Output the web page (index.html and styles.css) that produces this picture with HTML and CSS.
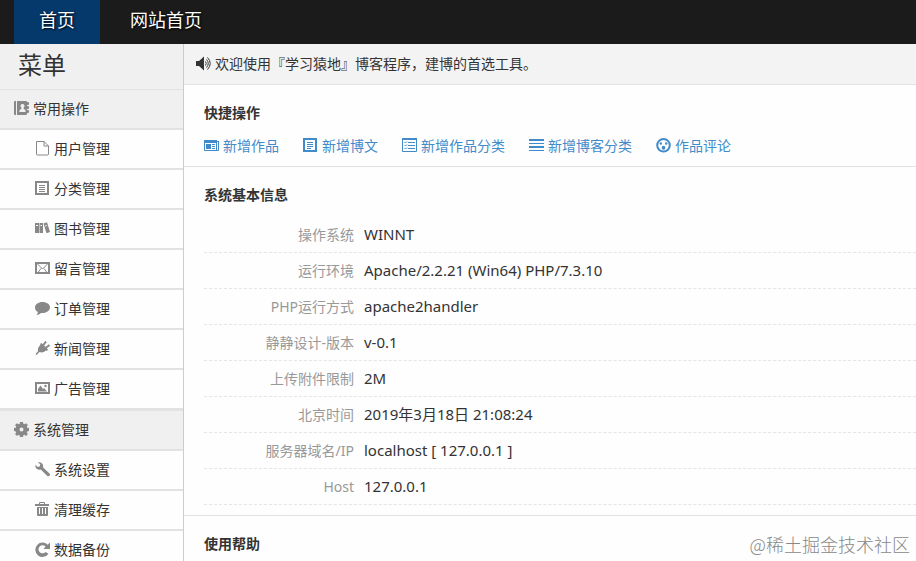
FILE: index.html
```html
<!DOCTYPE html>
<html lang="zh-CN">
<head>
<meta charset="utf-8">
<title>首页</title>
<link rel="stylesheet" href="styles.css">
</head>
<body>
<header class="topbar">
  <nav class="topnav">
    <a class="topnav-link active" href="#">首页</a>
    <a class="topnav-link" href="#">网站首页</a>
  </nav>
</header>
<div class="layout">
  <aside class="sidebar">
    <h1 class="menu-title">菜单</h1>
    <section class="group">
      <h2 class="group-title">
        <svg class="icon" viewBox="0 0 15 15"><path fill-rule="evenodd" d="M1 0h1v14H1q-1 0-1-1V1q0-1 1-1zM3 0h9q1 0 1 1v12q0 1-1 1H3zM8.500 3a2 2 0 0 0-1.200 3.600V8L5.500 9v2h6V9L9.700 8V6.600A2 2 0 0 0 8.500 3z"/><path d="M13 1h1q1 0 1 1v1q0 1-1 1h-1zM13 5h1q1 0 1 1v1q0 1-1 1h-1zM13 9h1q1 0 1 1v1q0 1-1 1h-1z"/></svg>
        常用操作</h2>
      <ul class="items">
        <li><a class="item" href="#"><svg class="icon" viewBox="0 0 15 15"><path class="line" d="M1.500.5h7.500l4.500 4.500v8q0 1-1 1h-10q-1 0-1-1zM9 .5V5h4.500"/></svg>用户管理</a></li>
        <li><a class="item" href="#"><svg class="icon" viewBox="0 0 15 15"><path class="thick" d="M1 1h12v12H1z"/><path d="M4 4h6v1H4zM4 6h6v1H4zM4 8h6v1H4zM4 10h6v1H4z"/></svg>分类管理</a></li>
        <li><a class="item" href="#"><svg class="icon" viewBox="0 0 15 15"><path fill-rule="evenodd" d="M0 2h4v10H0zM1 4v1h2V4zM4.500 2H8v10H4.500zM5.500 4v1H7V4zM8.500 2.500l3.500-1.200L15 11l-3.500 1.200zM10 4.500l.3 1 1.500-.5-.3-1z"/></svg>图书管理</a></li>
        <li><a class="item" href="#"><svg class="icon" viewBox="0 0 15 15"><path class="thick" d="M1 2h13v10H1z"/><path class="line" d="M2.500 3l5 5 5-5M3 11.500l3-4M12 11.500l-3-4"/></svg>留言管理</a></li>
        <li><a class="item" href="#"><svg class="icon" viewBox="0 0 15 15"><path d="M7.500 1C3.400 1 0 3.300 0 6.500c0 2 1.200 3.600 3 4.500-.2 1.200-.8 2-1.700 2.700 2 .1 3.700-.8 4.700-1.800 5 .7 9-2.100 9-5.400C15 3.300 11.600 1 7.500 1z"/></svg>订单管理</a></li>
        <li><a class="item" href="#"><svg class="icon" viewBox="0 0 15 15"><path d="M5 3l1.500-1L13 8.500 12 10l-1-.5c-2 2-4.500 2.500-6.500 1.500L1.500 14 .5 13l2.500-2.800C2.500 8 3.500 5.500 5.500 4z"/><path class="thick" d="M8 4.500l3-4M10.500 7l4-3"/></svg>新闻管理</a></li>
        <li><a class="item" href="#"><svg class="icon" viewBox="0 0 15 15"><path class="thick" d="M1 2h13v10H1z"/><path d="M3 10.500V8l2.500-3.500L8 8l1-1 3 3.500z"/><circle cx="10.500" cy="5" r="1.200"/></svg>广告管理</a></li>
      </ul>
    </section>
    <section class="group">
      <h2 class="group-title">
        <svg class="icon" viewBox="0 0 15 15"><path fill-rule="evenodd" d="M6 0h3l.4 1.900 1 .4L12 1.200 13.900 3l-1.100 1.700.4 1L15 6v3l-1.800.4-.4 1 1.100 1.600-1.900 1.900-1.600-1.100-1 .4L9 15H6l-.4-1.800-1-.4L3 13.900 1.100 12l1.100-1.600-.4-1L0 9V6l1.800-.3.4-1L1.100 3 3 1.200l1.600 1.100 1-.4zM7.500 5.500a2 2 0 1 0 0 4 2 2 0 0 0 0-4z"/></svg>
        系统管理</h2>
      <ul class="items">
        <li><a class="item" href="#"><svg class="icon" viewBox="0 0 15 15"><path d="M3 .5c2-.8 4.500.5 5 2.500.2.900.1 1.500-.1 2.200l6.600 6.300c.8.800.6 1.700 0 2.300-.7.600-1.600.7-2.400-.1L5.700 7.400C3.500 8.300.7 6.900.3 4.300L.4 3l2.400 1.900 2-.6.500-2z"/></svg>系统设置</a></li>
        <li><a class="item" href="#"><svg class="icon" viewBox="0 0 15 15"><path fill-rule="evenodd" d="M4 2V1q0-1 1-1h4q1 0 1 1v1h4v2H0V2zM5 2h4V1H5zM2 5h11v8q0 1-1 1H3q-1 0-1-1zM4 6v6h1V6zM7 6v6h1V6zM10 6v6h1V6z"/></svg>清理缓存</a></li>
        <li><a class="item" href="#"><svg class="icon" viewBox="0 0 15 15"><path d="M15 .5V7H8.500l2-2.300A4 4 0 1 0 10.500 10l3 1.700A7.200 7.200 0 1 1 12.700 2.700z"/></svg>数据备份</a></li>
      </ul>
    </section>
  </aside>
  <main class="content">
    <p class="notice"><svg class="icon" viewBox="0 0 15 15"><path d="M0 5h3l5-4.500v14L3 10H0z"/><path class="line" d="M9.500 5.500q1.500 2 0 4M10.500 3.500q3.500 4 0 8M11.500 1.500q5.500 6 0 12"/></svg>欢迎使用『学习猿地』博客程序，建博的首选工具。</p>
    <section class="panel">
      <h2 class="panel-title">快捷操作</h2>
      <div class="shortcuts">
        <a class="shortcut" href="#"><svg class="icon" viewBox="0 0 15 15"><path fill-rule="evenodd" d="M0 2h13v1h2v9q0 1-1 1H1q-1 0-1-1zM1 5v7h11V5zM13 4v8h1V4z"/><path d="M2 6h5v5H2zM8 6h3v1H8zM8 8h3v1H8zM8 10h3v1H8z"/></svg>新增作品</a>
        <a class="shortcut" href="#"><svg class="icon" viewBox="0 0 15 15"><path class="thick" d="M1 1h12v12H1z"/><path d="M4 4h6v1H4zM4 6h6v1H4zM4 8h6v1H4zM4 10h4v1H4z"/></svg>新增博文</a>
        <a class="shortcut" href="#"><svg class="icon" viewBox="0 0 15 15"><path class="line" d="M.5.5h14v13H.5zM2.500 4l1 1L5 3.500M2.500 7l1 1L5 6.500M2.500 10l1 1L5 9.500"/><path d="M0 0h15v2H0zM6 4h7v1H6zM6 7h7v1H6zM6 10h7v1H6z"/></svg>新增作品分类</a>
        <a class="shortcut" href="#"><svg class="icon" viewBox="0 0 15 15"><path d="M0 1h15v2H0zM0 5h15v1H0zM0 8h15v2H0zM0 12h15v1H0z"/></svg>新增博客分类</a>
        <a class="shortcut" href="#"><svg class="icon" viewBox="0 0 15 15"><circle class="thick" cx="7.500" cy="7.300" r="6.300"/><circle cx="4.800" cy="5.500" r="1.200"/><circle cx="10.200" cy="5.500" r="1.200"/><ellipse cx="7.500" cy="9.800" rx="1.800" ry="2"/></svg>作品评论</a>
      </div>
    </section>
    <section class="panel">
      <h2 class="panel-title">系统基本信息</h2>
      <dl class="info">
        <div class="row"><dt>操作系统</dt><dd>WINNT</dd></div>
        <div class="row"><dt>运行环境</dt><dd>Apache/2.2.21 (Win64) PHP/7.3.10</dd></div>
        <div class="row"><dt>PHP运行方式</dt><dd>apache2handler</dd></div>
        <div class="row"><dt>静静设计-版本</dt><dd>v-0.1</dd></div>
        <div class="row"><dt>上传附件限制</dt><dd>2M</dd></div>
        <div class="row"><dt>北京时间</dt><dd>2019年3月18日 21:08:24</dd></div>
        <div class="row"><dt>服务器域名/IP</dt><dd>localhost [ 127.0.0.1 ]</dd></div>
        <div class="row"><dt>Host</dt><dd>127.0.0.1</dd></div>
      </dl>
    </section>
    <section class="panel">
      <h2 class="panel-title">使用帮助</h2>
    </section>
  </main>
</div>
<div class="watermark">@稀土掘金技术社区</div>
</body>
</html>
```
FILE: styles.css
```css
* {
  box-sizing: border-box;
}

body {
  margin: 0;
  height: 100vh;
  overflow: hidden;
  display: flex;
  flex-direction: column;
  background: #fefefe;
  color: #333;
  font: 14px/20px "Noto Sans", "Noto Sans CJK SC", sans-serif;
}

h1, h2, p, ul, dl, dd {
  margin: 0;
  padding: 0;
}

a {
  color: inherit;
  text-decoration: none;
}

.icon {
  flex: none;
  width: 15px;
  height: 15px;
  margin-bottom: 2px;
  fill: currentColor;
}

.line, .thick {
  fill: none;
  stroke: currentColor;
}

.thick {
  stroke-width: 2;
}

.topbar {
  flex: none;
  background: #1b1b1b;
}

.topnav {
  display: flex;
  gap: 5px;
  padding-left: 14px;
}

.topnav-link {
  padding: 0 25px 4px;
  color: #fff;
  font-size: 18px;
  line-height: 40px;
  text-shadow: 1px 1px 2px #000;
}

.topnav-link.active {
  background: #05386b;
}

.layout {
  flex: 1;
  min-height: 0;
  display: flex;
}

.sidebar {
  flex: none;
  width: 184px;
  border-right: 1px solid #ccc;
  overflow: hidden;
}

.menu-title {
  padding: 0 0 3px 18px;
  background: #f0f0f0;
  border-bottom: 1px solid #e2e2e2;
  font-size: 24px;
  font-weight: 400;
  line-height: 42px;
}

.group + .group {
  border-top: 1px solid #e2e2e2;
}

.group-title, .item {
  display: flex;
  align-items: center;
  gap: 4px;
  height: 40px;
  border-bottom: 2px solid #e2e2e2;
  font-size: 14px;
  font-weight: 400;
}

.group-title {
  padding-left: 14px;
  background: #f0f0f0;
}

.items {
  list-style: none;
}

.item {
  padding-left: 35px;
}

.sidebar .icon {
  color: #888;
}

.content {
  flex: 1;
  min-width: 0;
}

.notice {
  display: flex;
  align-items: center;
  gap: 4px;
  height: 41px;
  padding-left: 12px;
  background: #f3f3f3;
  border-bottom: 1px solid #e2e2e2;
}

.panel {
  padding: 18px 0 10px 20px;
  border-bottom: 1px solid #e2e2e2;
}

.panel:last-child {
  border-bottom: 0;
}

.panel-title {
  font-size: 14px;
  font-weight: 700;
}

.shortcuts {
  display: flex;
  flex-wrap: wrap;
  gap: 24px;
  padding-top: 13px;
}

.shortcut {
  display: flex;
  align-items: center;
  gap: 4px;
  color: #428bca;
}

.info {
  padding-top: 12px;
}

.row {
  display: flex;
  align-items: center;
  gap: 10px;
  height: 36px;
  border-bottom: 1px dashed #e5e5e5;
}

.row dt {
  width: 150px;
  color: #999;
  text-align: right;
}

.row dd {
  padding-bottom: 2px;
  font-size: 15px;
}

.watermark {
  position: absolute;
  right: 6px;
  bottom: 5px;
  color: #888;
  font: 300 18px/24px "Noto Sans CJK SC", sans-serif;
}
```
